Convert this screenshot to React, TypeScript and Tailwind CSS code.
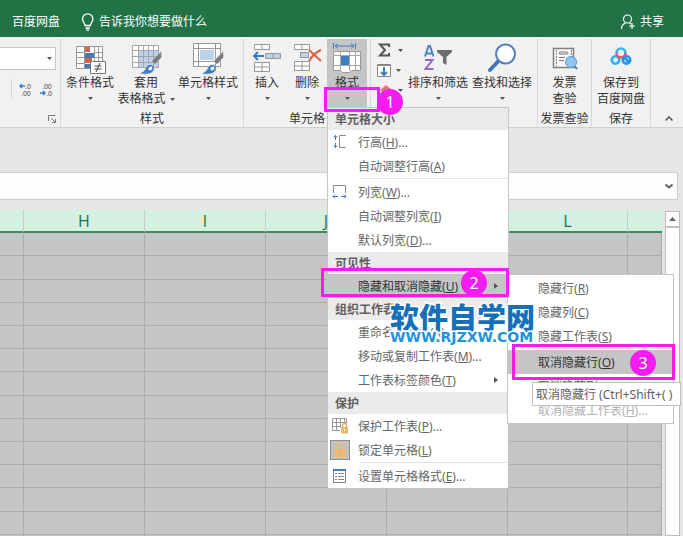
import { Fragment, type ReactNode } from "react";

type Item = {
  label: string;
  hotkey: string;
  suffix?: string;
  icon?: ReactNode;
  arrow?: boolean;
  active?: boolean;
  disabled?: boolean;
  lineAbove?: boolean;
};

type Section = { title: string; items: Item[] };

const COLUMNS = ["", "H", "I", "J", "K", "L", ""];
const ROWS = Array.from({ length: 14 }, (_, i) => i);

function Caret({ className = "" }: { className?: string }) {
  return (
    <svg viewBox="0 0 5 3" className={`h-[3px] w-[5px] shrink-0 fill-[#555] ${className}`}>
      <path d="M0 0h5L2.5 3z" />
    </svg>
  );
}

/* Ribbon icons */

function BrushTip() {
  return (
    <>
      <path d="M31.500 8v6.500L25 21.500 21.500 18z" fill="#7b7b7b" stroke="#f1f1f1" strokeWidth=".5" />
      <path
        d="M9.500 30.500c4-1.500 5.500-3.500 6.500-6 1.500-3 5-4 7-2s1.500 5-1 7c-3 2-8 2-12.500 1z"
        fill="#3f7dbd"
        stroke="#f1f1f1"
        strokeWidth=".5"
      />
      <path d="M18 26c1-2 3-3 4-2s0 3-2 3.500z" fill="#fff" />
    </>
  );
}

function ConditionalIcon() {
  return (
    <svg viewBox="0 0 32 32" className="size-8">
      <path d="M2.500 3.500h26v22h-26z" fill="#fff" />
      <path d="M11 4h5v5h-5zM11 15h7v5h-7z" fill="#dc5f42" />
      <path d="M11 10h9v5h-9zM11 21h5v5h-5z" fill="#4179b5" />
      <path
        d="M2.500 3.500h26v22h-26zM10.500 3.500v22M20.500 3.500v22M24.500 3.500v22M2.500 9.500h8M20 9.500h8M2.500 14.500h8M20 14.500h8M2.500 20.500h8"
        fill="none"
        stroke="#979797"
      />
      <path d="M16.500 18.500h15v12h-15z" fill="#fff" stroke="#777" />
      <path d="M20.500 23h7M20.500 26h7M26 20l-4 9" stroke="#444" fill="none" />
    </svg>
  );
}

function TableFormatIcon() {
  return (
    <svg viewBox="0 0 32 32" className="size-8">
      <path d="M2.500 2.500h26v22h-26z" fill="#fff" />
      <path d="M9 8h20v17H9z" fill="#bdd2e9" />
      <path
        d="M2.500 2.500h26v22h-26zM8.500 2.500v22M13.500 2.500v22M18.500 2.500v22M23.500 2.500v22M2.500 7.500h26M2.500 13.500h26M2.500 19.500h26"
        fill="none"
        stroke="#a3a7ab"
      />
      <BrushTip />
    </svg>
  );
}

function CellStyleIcon() {
  return (
    <svg viewBox="0 0 32 32" className="size-8">
      <path
        d="M1.500.5h27v23h-27zM6.500.5v23M23.500.5v23M1.500 5.500h27M1.500 18.500h27"
        fill="#fff"
        stroke="#979797"
      />
      <path d="M8 7h14v10H8z" fill="#bdd2e9" />
      <BrushTip />
    </svg>
  );
}

function InsertIcon() {
  return (
    <svg viewBox="0 0 32 32" className="size-8" fill="none" stroke="#979797">
      <path d="M3.500 1.500h15v5h-15zM11 1.500v5M3.500 19.500h15v9h-15zM11 19.500v9M3.500 24h15" fill="#fff" />
      <path d="M14.500 10.500h15v5h-15zM22 10.500v5" fill="#bdd2e9" />
      <path d="M13 13H3M7 9l-4 4 4 4" stroke="#3f7dbd" strokeWidth="2" />
    </svg>
  );
}

function DeleteIcon() {
  return (
    <svg viewBox="0 0 32 32" className="size-8" fill="none" stroke="#979797">
      <path d="M3.500 1.500h15v5h-15zM11 1.500v5M3.500 18.500h15v9h-15zM11 18.500v9M3.500 23h15" fill="#fff" />
      <path d="M9.500 9.500h8v5h-8z" fill="#bdd2e9" />
      <path d="M18 7l12 11M30 7c-5 2-9 6-12 11" stroke="#dc5f42" strokeWidth="2" />
    </svg>
  );
}

function FormatIcon() {
  return (
    <svg viewBox="0 0 32 32" className="size-8" fill="none">
      <path d="M2.500 0v6M24.500 0v6M4 3h19M7 .5L4 3l3 2.500M20 .5L23 3l-3 2.500" stroke="#3f7dbd" />
      <path d="M2.500 8.500h27v19h-9l-2 2h-7l-2-2h-7z" fill="#fff" stroke="#979797" />
      <path d="M9.500 8v20M18.500 8v20M24.500 8v20M2 12.500h28M2 22.500h28" stroke="#a5a5a5" />
      <path d="M10 13h8v9h-8z" fill="#3f7dbd" />
    </svg>
  );
}

function SortFilterIcon() {
  return (
    <svg viewBox="0 0 32 32" className="size-8" fill="none">
      <path d="M3 13.500L6.500 3h1.500L11.500 13.500M4.500 10.500h5.500" stroke="#4a86c0" strokeWidth="2" />
      <path d="M3 17h7.500L3.500 26h8" stroke="#9a66bb" strokeWidth="2" />
      <path d="M15 7h15v2l-5.500 5v8L21 20v-6l-6-5z" fill="#6e6e6e" />
    </svg>
  );
}

function FindIcon() {
  return (
    <svg viewBox="0 0 32 32" className="size-8" fill="none">
      <path d="M12 18.500L4 27" stroke="#4475b5" strokeWidth="4" strokeLinecap="round" />
      <circle cx="19.500" cy="11" r="9.500" fill="#fff" stroke="#4a7fb8" strokeWidth="2" />
    </svg>
  );
}

function InvoiceIcon() {
  return (
    <svg viewBox="0 0 32 32" className="size-8" fill="none">
      <path d="M4.500 5.500h20v19h-20z" fill="#f7f7f7" stroke="#808080" strokeWidth="1.500" />
      <path d="M7.500 7v16M22.500 7v7" stroke="#808080" strokeDasharray="2 1" />
      <rect x="10" y="9" width="9" height="2" rx="1" stroke="#777" />
      <path d="M10 14.500h6M10 17.500h5" stroke="#777" />
      <path d="M25 22.500l3 3.500" stroke="#4d82b0" strokeWidth="2" />
      <circle cx="22" cy="19" r="5.500" fill="#93c5f2" stroke="#5b9bd0" />
    </svg>
  );
}

function NetdiskIcon() {
  return (
    <svg viewBox="0 0 32 32" className="size-8" fill="none" strokeWidth="2.600">
      <path d="M11.500 10a4.500 4.500 0 0 1 9 0" stroke="#35b6f2" />
      <circle cx="10.500" cy="17" r="3.700" stroke="#27b3f2" />
      <circle cx="21.500" cy="17" r="3.700" stroke="#2193f0" />
      <path d="M11.500 10a4.500 4.500 0 0 0 9 0" stroke="#f0526c" />
      <path d="M18.500 13.500l5.500 6" stroke="#2193f0" />
    </svg>
  );
}

/* Menu icons */

function RowHeightIcon() {
  return (
    <svg viewBox="0 0 16 16" className="size-4" fill="none">
      <path d="M3.500 1v5M3.500 9v5M1.500 3.500l2-2 2 2M1.500 11.500l2 2 2-2" stroke="#3f7dbd" />
      <path d="M14 1.500H7.500v12H14" stroke="#8a8a8a" />
    </svg>
  );
}

function ColumnWidthIcon() {
  return (
    <svg viewBox="0 0 16 16" className="size-4" fill="none">
      <path d="M1.500 9V1.500h12V9" stroke="#8a8a8a" />
      <path d="M1 12.500h5M9 12.500h5M3 10.500l-2 2 2 2M12 10.500l2 2-2 2" stroke="#3f7dbd" />
    </svg>
  );
}

function ProtectSheetIcon() {
  return (
    <svg viewBox="0 0 16 16" className="size-4" fill="none">
      <path d="M8 12.500H.5V.5h14V6M4.500.5v12M8.500.5v9M12.500.5v5M.5 4.500h14M.5 8.500h8" stroke="#999" />
      <path d="M10.500 10V7.500a2 2 0 0 1 4 0V10" stroke="#ecb663" strokeWidth="1.500" />
      <path d="M9 9h7v6.500H9z" fill="#ecb663" />
      <path d="M12.500 11v2" stroke="#fff" />
    </svg>
  );
}

function LockIcon() {
  return (
    <span className="flex size-5 items-center justify-center border border-[#8d8d8d] bg-[#c1c1c1]">
      <svg viewBox="0 0 16 16" className="size-4" fill="none">
        <path d="M4.500 8V4.500a3.500 3.500 0 0 1 7 0V8" stroke="#eebc70" strokeWidth="1.600" />
        <path d="M2.500 7h11v8.500h-11z" fill="#eebc70" />
        <path d="M8 9.500v3" stroke="#b8b0a4" strokeWidth="1.500" />
      </svg>
    </span>
  );
}

function FormatCellsIcon() {
  return (
    <svg viewBox="0 0 16 16" className="size-4" fill="none">
      <path d="M1.500 1.500h12v13h-12z" fill="#fff" stroke="#808080" />
      <path d="M1 1h13v2H1z" fill="#3f7dbd" />
      <path d="M3 5.500h2M3 8.500h2M3 11.500h2M6 5.500h6M6 8.500h6M6 11.500h6" stroke="#888" />
    </svg>
  );
}

const formatMenu: Section[] = [
  {
    title: "单元格大小",
    items: [
      { label: "行高", hotkey: "H", suffix: "...", icon: <RowHeightIcon /> },
      { label: "自动调整行高", hotkey: "A" },
      { label: "列宽", hotkey: "W", suffix: "...", icon: <ColumnWidthIcon />, lineAbove: true },
      { label: "自动调整列宽", hotkey: "I" },
      { label: "默认列宽", hotkey: "D", suffix: "..." },
    ],
  },
  {
    title: "可见性",
    items: [{ label: "隐藏和取消隐藏", hotkey: "U", arrow: true, active: true }],
  },
  {
    title: "组织工作表",
    items: [
      { label: "重命名工作表", hotkey: "R" },
      { label: "移动或复制工作表", hotkey: "M", suffix: "..." },
      { label: "工作表标签颜色", hotkey: "T", arrow: true },
    ],
  },
  {
    title: "保护",
    items: [
      { label: "保护工作表", hotkey: "P", suffix: "...", icon: <ProtectSheetIcon /> },
      { label: "锁定单元格", hotkey: "L", icon: <LockIcon /> },
      { label: "设置单元格格式", hotkey: "E", suffix: "...", icon: <FormatCellsIcon />, lineAbove: true },
    ],
  },
];

const hideMenu: Item[] = [
  { label: "隐藏行", hotkey: "R" },
  { label: "隐藏列", hotkey: "C" },
  { label: "隐藏工作表", hotkey: "S" },
  { label: "取消隐藏行", hotkey: "O", active: true, lineAbove: true },
  { label: "取消隐藏列", hotkey: "L" },
  { label: "取消隐藏工作表", hotkey: "H", suffix: "...", disabled: true },
];

function MenuItem({ item }: { item: Item }) {
  return (
    <>
      {item.lineAbove && <div className="mb-px ml-8 h-px bg-[#e1e1e1]" />}
      <button
        type="button"
        role="menuitem"
        disabled={item.disabled}
        className={`flex h-6 w-full items-center pr-2.5 text-left ${
          item.active ? "bg-[#c5c5c5] text-[#333]" : "text-[#666]"
        } disabled:text-[#b1b1b1]`}
      >
        <span className="flex w-[30px] shrink-0 items-center justify-start pl-0.5">
          {item.icon && <span className="flex w-5 justify-center">{item.icon}</span>}
        </span>
        <span className="flex-1 pt-0.5 whitespace-nowrap">
          {item.label}(<u>{item.hotkey}</u>){item.suffix}
        </span>
        {item.arrow && (
          <svg viewBox="0 0 4 6" className="h-1.5 w-1 fill-[#555]">
            <path d="M0 0l4 3-4 3z" />
          </svg>
        )}
      </button>
    </>
  );
}

function FormatMenu() {
  return (
    <div
      role="menu"
      aria-label="格式"
      className="absolute top-full left-0 z-10 w-[182px] border border-[#c6c6c6] bg-white"
    >
      {formatMenu.map((section) => (
        <Fragment key={section.title}>
          <div className="flex h-[22px] items-center bg-[#ebebeb] pt-0.5 pl-[7px] font-bold text-[#606060]">
            {section.title}
          </div>
          {section.items.map((item) =>
            item.active ? (
              <div key={item.label} className="relative">
                <MenuItem item={item} />
                <div
                  role="menu"
                  aria-label={item.label}
                  className="absolute top-0 left-full -ml-px w-[167px] border border-[#c6c6c6] bg-white py-px"
                >
                  {hideMenu.map((sub) => (
                    <MenuItem key={sub.label} item={sub} />
                  ))}
                </div>
              </div>
            ) : (
              <MenuItem key={item.label} item={item} />
            )
          )}
        </Fragment>
      ))}
    </div>
  );
}

function RibbonButton({
  icon,
  lines,
  caret = "below",
  width,
  active,
}: {
  icon: ReactNode;
  lines: string[];
  caret?: "below" | "inline" | "none";
  width: string;
  active?: boolean;
}) {
  return (
    <button
      type="button"
      className={`flex h-[68px] flex-col items-center pt-1 leading-4 whitespace-nowrap ${width} ${
        active ? "bg-[#c5c5c5]" : ""
      }`}
    >
      {icon}
      {lines.map((line, i) => (
        <span key={line} className="flex items-center gap-1">
          {line}
          {caret === "inline" && i === lines.length - 1 && <Caret />}
        </span>
      ))}
      {caret === "below" && <Caret className="mt-1.5" />}
    </button>
  );
}

function RibbonGroup({
  label,
  width,
  children,
}: {
  label?: string;
  width: string;
  children: ReactNode;
}) {
  return (
    <section className={`flex shrink-0 flex-col border-r border-[#d8d8d8] ${width}`}>
      <div className="flex h-[68px] justify-center">{children}</div>
      {label && <div className="pt-1 text-center leading-4 whitespace-nowrap">{label}</div>}
    </section>
  );
}

function TopBar() {
  return (
    <header className="flex h-[37px] items-center bg-[#217346] px-3 pt-1.5 text-white">
      <button type="button">百度网盘</button>
      <button type="button" className="ml-5 flex items-center gap-1">
        <svg viewBox="0 0 15 18" className="h-[18px] w-[15px]" fill="none" stroke="#fff" strokeWidth="1.300">
          <path d="M5 12.500c0-2-2.500-3.500-2.500-6.500a5.200 5.200 0 0 1 10.400 0c0 3-2.500 4.500-2.500 6.500zM5.500 15h4.500M6.500 17h2.500" />
        </svg>
        告诉我你想要做什么
      </button>
      <button type="button" className="mr-[7px] ml-auto flex items-center gap-1">
        <svg viewBox="0 0 16 16" className="size-4" fill="none" stroke="#fff" strokeWidth="1.200">
          <circle cx="7.500" cy="5" r="4" />
          <path d="M1.500 15c0-3 1.500-5 4-6M9.500 9l1.500 1M12 9v6M9 12h6" />
        </svg>
        共享
      </button>
    </header>
  );
}

function NumberGroup() {
  return (
    <section className="flex w-[61px] shrink-0 flex-col border-r border-[#d8d8d8]">
      <div className="relative mt-2 mr-1 h-[23px]">
        <select
          aria-label="数字格式"
          className="block h-full w-full appearance-none border border-l-0 border-[#c6c6c6] bg-white"
        >
          <option></option>
        </select>
        <Caret className="absolute top-2.5 right-1" />
      </div>
      <div className="mt-[9px] ml-[11px] flex h-5 items-center gap-1.5 border-l border-[#d4d4d4] pl-1.5">
        <button type="button" aria-label="增加小数位数">
          <svg viewBox="0 0 15 15" className="size-[15px]">
            <path d="M7 4H2M4 2L2 4l2 2" fill="none" stroke="#3f7dbd" strokeWidth="1.500" />
            <g fill="#444" fontFamily="Liberation Sans, sans-serif" fontSize="7">
              <text x="7" y="7">.0</text>
              <text x="3" y="14">.00</text>
            </g>
          </svg>
        </button>
        <button type="button" aria-label="减少小数位数">
          <svg viewBox="0 0 15 15" className="size-[15px]">
            <path d="M1 11h5M4 9l2 2-2 2" fill="none" stroke="#3f7dbd" strokeWidth="1.500" />
            <g fill="#444" fontFamily="Liberation Sans, sans-serif" fontSize="7">
              <text x="3" y="7">.00</text>
              <text x="7" y="14">.0</text>
            </g>
          </svg>
        </button>
      </div>
      <button type="button" aria-label="数字格式设置" className="mt-4 mr-1 self-end">
        <svg viewBox="0 0 8 8" className="size-2" fill="none" stroke="#777">
          <path d="M.5 6V.5H7M3 3l4 4M7.500 4v3.500H4" />
        </svg>
      </button>
    </section>
  );
}

function SumButtons() {
  return (
    <div className="flex w-8 flex-col gap-1 pt-[3px] pl-[3px]">
      <button type="button" aria-label="自动求和" className="flex items-center gap-[7px]">
        <svg viewBox="0 0 14 16" className="h-4 w-3.5" fill="none">
          <path d="M12 5V2.500H3L8 8l-5 5.500h9V11" stroke="#555" strokeWidth="2" />
        </svg>
        <Caret />
      </button>
      <button type="button" aria-label="填充" className="flex items-center gap-[5px]">
        <svg viewBox="0 0 14 16" className="h-4 w-3.5" fill="none">
          <path d="M.5 2.500h13v12H.5z" fill="#fff" stroke="#858585" />
          <path d="M.5 3h13" stroke="#858585" strokeWidth="2" />
          <path d="M7 5v8M4 10l3 3 3-3" stroke="#3f7dbd" strokeWidth="2" />
        </svg>
        <Caret />
      </button>
      <button type="button" aria-label="清除" className="flex items-center gap-[7px]">
        <svg viewBox="0 0 14 16" className="h-4 w-3.5">
          <path d="M9 3l5 4-6 6-5-5z" fill="#e8727f" />
        </svg>
        <Caret />
      </button>
    </div>
  );
}

function Ribbon() {
  return (
    <div className="flex h-[91px] border-b border-[#d0d0d0] bg-[#f1f1f1] pt-0.5 text-[#333]">
      <NumberGroup />
      <RibbonGroup label="样式" width="w-[183px]">
        <RibbonButton icon={<ConditionalIcon />} lines={["条件格式"]} width="w-14" />
        <RibbonButton icon={<TableFormatIcon />} lines={["套用", "表格格式"]} caret="inline" width="w-14" />
        <RibbonButton icon={<CellStyleIcon />} lines={["单元格样式"]} width="w-[68px]" />
      </RibbonGroup>
      <RibbonGroup label="单元格" width="w-[127px]">
        <RibbonButton icon={<InsertIcon />} lines={["插入"]} width="w-10" />
        <RibbonButton icon={<DeleteIcon />} lines={["删除"]} width="w-10" />
        <div className="relative">
          <RibbonButton icon={<FormatIcon />} lines={["格式"]} width="w-10" active />
          <FormatMenu />
        </div>
      </RibbonGroup>
      <RibbonGroup width="w-[167px]">
        <SumButtons />
        <RibbonButton icon={<SortFilterIcon />} lines={["排序和筛选"]} width="w-16" />
        <RibbonButton icon={<FindIcon />} lines={["查找和选择"]} width="w-16" />
      </RibbonGroup>
      <RibbonGroup label="发票查验" width="w-[54px]">
        <RibbonButton icon={<InvoiceIcon />} lines={["发票", "查验"]} caret="none" width="w-full" />
      </RibbonGroup>
      <RibbonGroup label="保存" width="w-[59px]">
        <RibbonButton icon={<NetdiskIcon />} lines={["保存到", "百度网盘"]} caret="none" width="w-full" />
      </RibbonGroup>
      <button type="button" aria-label="折叠功能区" className="mr-2.5 mb-1.5 ml-auto self-end">
        <svg viewBox="0 0 8 5" className="h-[5px] w-2" fill="none" stroke="#555" strokeWidth="1.500">
          <path d="M.5 4.500L4 1l3.500 3.500" />
        </svg>
      </button>
    </div>
  );
}

function FormulaBar() {
  return (
    <div className="mt-11 mr-[5px] flex h-7 border border-l-0 border-[#cfcfcf] bg-[#fdfdfd]">
      <input aria-label="编辑栏" className="min-w-0 flex-1 bg-transparent px-2 outline-none" />
      <button type="button" aria-label="展开编辑栏" className="px-1">
        <svg viewBox="0 0 8 5" className="h-[5px] w-2" fill="none" stroke="#666" strokeWidth="2">
          <path d="M.5.5L4 3.500 7.500.5" />
        </svg>
      </button>
    </div>
  );
}

function Sheet() {
  return (
    <div className="mt-2.5 flex min-h-0 flex-1 overflow-hidden">
      <table className="flex-1 table-fixed border-separate border-spacing-0 self-start bg-[#c5c5c5]">
        <colgroup>
          <col className="w-6" />
          <col className="w-[121px]" />
          <col className="w-[121px]" />
          <col className="w-[121px]" />
          <col className="w-[121px]" />
          <col className="w-[120px]" />
          <col />
        </colgroup>
        <thead>
          <tr className="h-[23px]">
            {COLUMNS.map((name, i) => (
              <th
                key={i}
                className="border-r border-b-2 border-r-[#c3cfc8] border-b-[#42885f] bg-[#d3f0e0] p-0 font-[Open_Sans,sans-serif] text-base leading-5 font-normal text-[#217346] last:border-r-0"
              >
                {name}
              </th>
            ))}
          </tr>
        </thead>
        <tbody>
          {ROWS.map((row) => (
            <tr key={row} className={row % 5 === 1 ? "h-6" : "h-[23px]"}>
              {COLUMNS.map((_, i) => (
                <td key={i} className="border-r border-b border-[#acacac] p-0"></td>
              ))}
            </tr>
          ))}
        </tbody>
      </table>
      <div className="flex w-[21px] shrink-0 flex-col pt-px pr-[3px] pl-[3px]">
        <button
          type="button"
          aria-label="向上滚动"
          className="flex h-4 items-center justify-center border border-[#bdbdbd] bg-white"
        >
          <svg viewBox="0 0 7 4" className="h-1 w-[7px] fill-[#666]">
            <path d="M3.500 0L7 4H0z" />
          </svg>
        </button>
        <div className="flex-1 border border-[#bdbdbd] bg-white" />
      </div>
    </div>
  );
}

function StepBadge({ step, className }: { step: number; className: string }) {
  return (
    <span
      className={`absolute z-20 flex size-[26px] items-center justify-center rounded-full bg-[#f41cf0] text-base text-white ${className}`}
    >
      {step}
    </span>
  );
}

export default function App() {
  return (
    <div className="relative flex h-screen flex-col overflow-hidden bg-[#e6e6e6] font-[Noto_Sans,Noto_Sans_CJK_SC,sans-serif] text-xs">
      <TopBar />
      <Ribbon />
      <FormulaBar />
      <Sheet />

      {/* Tooltip of the hovered submenu entry */}
      <div
        role="tooltip"
        className="absolute top-[382px] left-[532px] z-20 flex h-6 items-center border border-[#bebebe] bg-white pt-0.5 pr-2 pl-[3px] whitespace-nowrap text-[#606060]"
      >
        取消隐藏行 (Ctrl+Shift+( )
      </div>

      {/* Watermark */}
      <div className="pointer-events-none absolute top-[301px] left-[390px] z-20 whitespace-nowrap [paint-order:stroke] [-webkit-text-stroke:3px_white]">
        <div className="font-[Noto_Sans_CJK_SC,sans-serif] text-[29px] leading-[30px] font-black text-[#1471b9]">
          软件自学网
        </div>
        <div className="font-[DejaVu_Sans,sans-serif] text-sm leading-3 font-bold text-[#1c93dc]">
          WWW.RJZXW.COM
        </div>
      </div>

      {/* Numbered steps */}
      <div className="absolute top-[87px] left-[324px] z-20 h-[25px] w-14 border-3 border-[#f41cf0]" />
      <StepBadge step={1} className="top-[89px] left-[377px]" />
      <div className="absolute top-[268px] left-[321px] z-20 h-[29px] w-[188px] border-3 border-[#f41cf0]" />
      <StepBadge step={2} className="top-[270px] left-[461px]" />
      <div className="absolute top-[344px] left-[512px] z-20 h-9 w-[163px] border-3 border-[#f41cf0]" />
      <StepBadge step={3} className="top-[350px] left-[630px]" />
    </div>
  );
}
